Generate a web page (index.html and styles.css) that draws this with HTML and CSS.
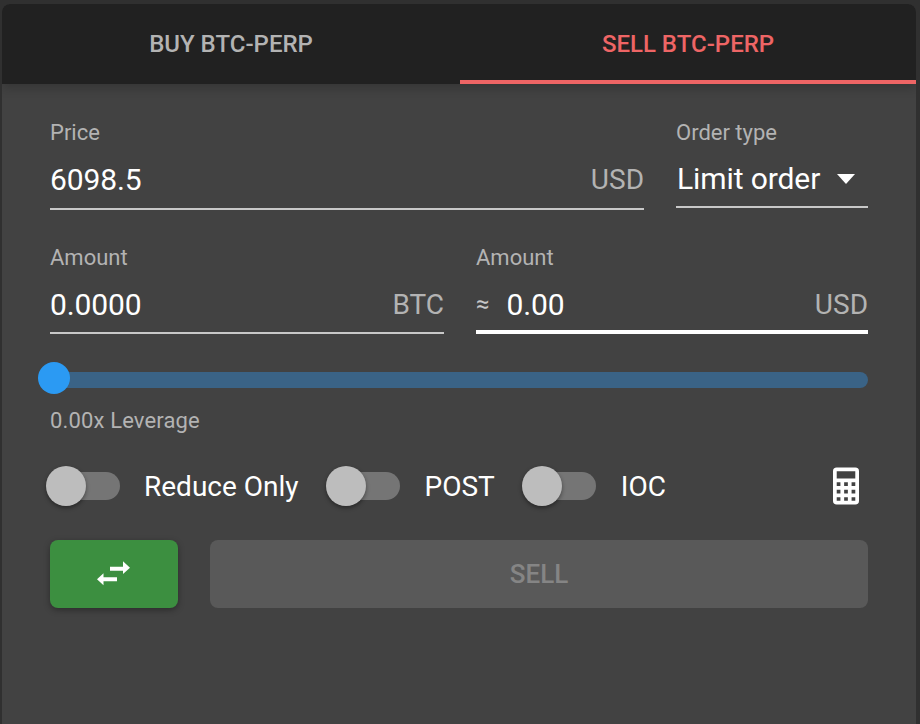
FILE: index.html
```html
<!DOCTYPE html>
<html lang="en">
<head>
  <meta charset="UTF-8" />
  <title>Order form</title>
  <link rel="stylesheet" href="styles.css">
</head>
<body>
  <main class="card">
    <div class="tabs">
      <div class="tab">BUY BTC-PERP</div>
      <div class="tab active">SELL BTC-PERP</div>
    </div>

    <div class="form">
      <div class="row row-price">
        <div class="field grow">
          <div class="label">Price</div>
          <div class="input">
            <span class="value">6098.5</span>
            <span class="unit">USD</span>
          </div>
        </div>
        <div class="field select-field">
          <div class="label">Order type</div>
          <div class="input select">
            <span class="select-value">Limit order</span>
            <span class="caret"></span>
          </div>
        </div>
      </div>

      <div class="row row-amount">
        <div class="field amount-left">
          <div class="label">Amount</div>
          <div class="input">
            <span class="value">0.0000</span>
            <span class="unit">BTC</span>
          </div>
        </div>
        <div class="field grow">
          <div class="label">Amount</div>
          <div class="input focused">
            <span class="approx">≈</span>
            <span class="value">0.00</span>
            <span class="unit">USD</span>
          </div>
        </div>
      </div>

      <div class="slider">
        <div class="slider-track"></div>
        <div class="slider-thumb"></div>
      </div>
      <div class="leverage">0.00x Leverage</div>

      <div class="options">
        <div class="switch"><span class="switch-track"></span><span class="switch-thumb"></span></div>
        <span class="option-label label-reduce">Reduce Only</span>
        <div class="switch"><span class="switch-track"></span><span class="switch-thumb"></span></div>
        <span class="option-label label-post">POST</span>
        <div class="switch"><span class="switch-track"></span><span class="switch-thumb"></span></div>
        <span class="option-label">IOC</span>
        <svg class="calc" viewBox="5 2 14 20" aria-hidden="true">
          <path fill="#fff" d="M7,2H17A2,2 0 0,1 19,4V20A2,2 0 0,1 17,22H7A2,2 0 0,1 5,20V4A2,2 0 0,1 7,2M7,4V8H17V4H7M7,10V12H9V10H7M11,10V12H13V10H11M15,10V12H17V10H15M7,14V16H9V14H7M11,14V16H13V14H11M15,14V16H17V14H15M7,18V20H9V18H7M11,18V20H13V18H11M15,18V20H17V18H15Z"/>
        </svg>
      </div>

      <div class="actions">
        <button class="btn-swap">
          <svg viewBox="0 0 34 26" width="34" height="26" aria-hidden="true">
            <path fill="#fff" d="M13 5.700H26V.3L33 6.700 26 13V9.700H13zM20 20.300H6.500V24.300L0 18.300 6.500 12.300V16.300H20z"/>
          </svg>
        </button>
        <button class="btn-sell">SELL</button>
      </div>
    </div>
  </main>
</body>
</html>
```

FILE: styles.css
```css
* {
  box-sizing: border-box;
  margin: 0;
  padding: 0;
}

html, body {
  height: 100%;
}

body {
  background: #303030;
  font-family: Roboto, sans-serif;
  padding: 4px 4px 0 2px;
  overflow: hidden;
}

.card {
  height: 100%;
  background: #424242;
  border-radius: 8px 8px 0 0;
  overflow: hidden;
}

.tabs {
  display: flex;
  height: 80px;
  background: #212121;
  box-shadow: 0 4px 10px rgba(0, 0, 0, 0.2);
  position: relative;
}

.tab {
  flex: 0 0 458px;
  display: flex;
  align-items: center;
  justify-content: center;
  font-size: 24px;
  font-weight: 500;
  color: #b3b3b3;
}

.tab.active {
  flex: 1;
  color: #ee6565;
  border-bottom: 4px solid #ee6565;
  padding-top: 4px;
}

.form {
  padding: 37px 48px 0;
}

.row {
  display: flex;
  gap: 32px;
}

.row-amount {
  margin-top: 36px;
}

.field {
  display: flex;
  flex-direction: column;
}

.grow {
  flex: 1;
}

.amount-left {
  flex: 0 0 394px;
}

.select-field {
  width: 192px;
}

.label {
  font-size: 22px;
  line-height: 24px;
  color: #b3b3b3;
}

.input {
  display: flex;
  align-items: center;
  height: 65px;
  padding-top: 6px;
  border-bottom: 2px solid #c8c8c8;
}

.row-amount .input {
  height: 64px;
}

.row-amount .input.focused {
  padding-top: 8px;
  border-bottom: 4px solid #fff;
}

.input.select {
  height: 63px;
  padding-left: 1px;
}

.value {
  flex: 1;
  font-size: 30px;
  letter-spacing: -0.1px;
  color: #fff;
}

.unit {
  font-size: 28px;
  color: #b3b3b3;
}

.approx {
  font-size: 24px;
  color: #c8c8c8;
  margin-right: 17px;
}

.select-value {
  flex: 1;
  font-size: 30px;
  letter-spacing: -0.1px;
  color: #fff;
}

.caret {
  width: 0;
  height: 0;
  border-left: 9.500px solid transparent;
  border-right: 9.500px solid transparent;
  border-top: 10px solid #fff;
  margin-right: 13px;
}

.slider {
  position: relative;
  height: 32px;
  margin-top: 28px;
  display: flex;
  align-items: center;
}

.slider-track {
  flex: 1;
  height: 16px;
  margin-left: 4px;
  margin-top: 4px;
  background: #3a6386;
  border-radius: 0 8px 8px 0;
}

.slider-thumb {
  position: absolute;
  left: -12px;
  top: 0;
  width: 32px;
  height: 32px;
  border-radius: 50%;
  background: #2b9af3;
}

.leverage {
  margin-top: 15px;
  font-size: 22px;
  line-height: 24px;
  letter-spacing: 0.15px;
  color: #b3b3b3;
}

.options {
  display: flex;
  align-items: center;
  height: 40px;
  margin-top: 33px;
}

.switch {
  position: relative;
  width: 74px;
  height: 40px;
  margin-left: -4px;
}

.switch-track {
  position: absolute;
  left: 4px;
  right: 0;
  top: 6px;
  height: 28px;
  border-radius: 14px;
  background: #757575;
}

.switch-thumb {
  position: absolute;
  left: 0;
  top: 0;
  width: 40px;
  height: 40px;
  border-radius: 50%;
  background: #bdbdbd;
  box-shadow: 0 2px 4px rgba(0, 0, 0, 0.4);
}

.option-label {
  font-size: 28px;
  color: #fff;
  margin-left: 25px;
}

.label-reduce {
  margin-left: 24px;
  margin-right: 31px;
}

.label-post {
  margin-right: 31px;
}

.calc {
  width: 26px;
  height: 38px;
  margin-left: auto;
  margin-right: 9px;
}

.actions {
  display: flex;
  gap: 32px;
  margin-top: 34px;
}

.actions button {
  height: 68px;
  border: 0;
  border-radius: 8px;
  font-family: inherit;
}

.btn-swap {
  width: 128px;
  background: #3c8f40;
  box-shadow: 0 2px 6px rgba(0, 0, 0, 0.35);
  display: flex;
  align-items: center;
  justify-content: center;
}

.btn-sell {
  flex: 1;
  background: #595959;
  color: #858585;
  font-size: 26px;
  font-weight: 500;
}
```
